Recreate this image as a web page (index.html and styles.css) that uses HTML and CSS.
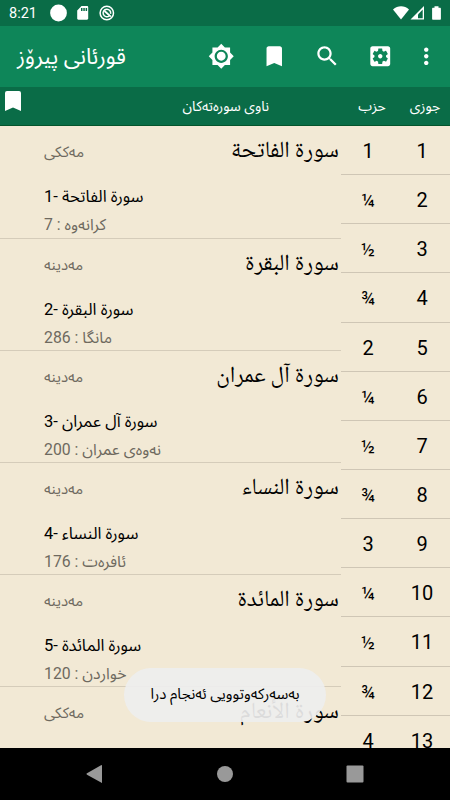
FILE: index.html
```html
<!DOCTYPE html>
<html lang="ckb">
<head>
  <meta charset="UTF-8" />
  <meta name="viewport" content="width=device-width, initial-scale=1" />
  <title>قورئانی پیرۆز</title>
  <link rel="stylesheet" href="styles.css">
</head>
<body>
  <div class="status-bar">
    <span class="clock">8:21</span>
    <svg class="status-left" width="66" height="18" viewBox="0 0 66 18">
      <circle cx="8.5" cy="9" r="8.4" fill="#fff"/>
      <path d="M31.5 2h5.500c.7 0 1.200.5 1.200 1.200v11.400c0 .7-.5 1.200-1.200 1.200h-8.600c-.7 0-1.200-.5-1.200-1.200V6.500zM31 4v3h1.500V4zm2.300 0v3h1.500V4zm2.300 0v3h1.500V4z" fill="#fff" fill-rule="evenodd"/>
      <g fill="none" stroke="#fff">
        <circle cx="56.800" cy="9" r="6.700" stroke-width="1.500"/>
        <path d="M59.200 12a3.800 3.800 0 1 1 1.400-2.200" stroke-width="1.500"/>
        <path d="M54.500 7l6.300 5.600" stroke-width="1.900"/>
      </g>
    </svg>
    <svg class="status-right" width="50" height="16" viewBox="0 0 50 16">
      <path d="M0 4.500C4.700.3 11.500.3 16 4.500L8 14.500z" fill="#fff"/>
      <path d="M31 1v13.500H17.500z" fill="#fff"/>
      <path d="M29.700 4.500v8.700h-4.700V9.500z" fill="#0a6c47"/>
      <path d="M41.500 1.200h4v1.500h1.400c.6 0 1 .4 1 1v10c0 .6-.4 1-1 1h-6.800c-.6 0-1-.4-1-1v-10c0-.6.4-1 1-1h1.400z" fill="#fff"/>
    </svg>
  </div>

  <header class="toolbar">
    <h1 dir="rtl">قورئانی پیرۆز</h1>
    <div class="actions">
      <svg viewBox="0 0 24 24"><path d="M20 8.690V4h-4.690L12 .69 8.690 4H4v4.690L.69 12 4 15.310V20h4.690L12 23.310 15.310 20H20v-4.690L23.310 12 20 8.690zM12 18c-3.310 0-6-2.690-6-6s2.690-6 6-6 6 2.690 6 6-2.690 6-6 6zm0-10c-2.210 0-4 1.790-4 4s1.790 4 4 4 4-1.790 4-4-1.790-4-4-4z"/></svg>
      <svg viewBox="0 0 24 24"><path d="M17 3H7c-1.100 0-1.990.9-1.990 2L5 21l7-3 7 3V5c0-1.100-.9-2-2-2z"/></svg>
      <svg viewBox="0 0 24 24"><path d="M15.500 14h-.79l-.28-.27C15.410 12.590 16 11.110 16 9.500 16 5.910 13.090 3 9.500 3S3 5.910 3 9.500 5.910 16 9.500 16c1.610 0 3.090-.59 4.230-1.570l.27.28v.79l5 4.990L20.490 19l-4.990-5zm-6 0C7.010 14 5 11.990 5 9.500S7.010 5 9.500 5 14 7.010 14 9.500 11.990 14 9.500 14z"/></svg>
      <svg viewBox="0 0 24 24"><path d="M12 10c-1.100 0-2 .9-2 2s.9 2 2 2 2-.9 2-2-.9-2-2-2zm7-7H5c-1.110 0-2 .9-2 2v14c0 1.100.89 2 2 2h14c1.110 0 2-.9 2-2V5c0-1.100-.89-2-2-2zm-1.750 9c0 .23-.02.46-.05.68l1.480 1.160c.13.11.17.3.08.45l-1.400 2.420c-.09.15-.27.21-.43.15l-1.740-.7c-.36.28-.76.51-1.180.69l-.26 1.850c-.03.17-.18.3-.35.3h-2.800c-.17 0-.32-.13-.35-.29l-.26-1.850c-.43-.18-.82-.41-1.180-.69l-1.740.7c-.16.06-.34 0-.43-.15l-1.400-2.420c-.09-.15-.05-.34.08-.45l1.480-1.160c-.03-.23-.05-.46-.05-.69 0-.23.02-.46.05-.68l-1.480-1.160c-.13-.11-.17-.3-.08-.45l1.400-2.420c.09-.15.27-.21.43-.15l1.740.7c.36-.28.76-.51 1.180-.69l.26-1.850c.03-.17.18-.3.35-.3h2.800c.17 0 .32.13.35.29l.26 1.850c.43.18.82.41 1.180.69l1.740-.7c.16-.06.34 0 .43.15l1.400 2.420c.09.15.05.34-.08.45l-1.480 1.160c.03.23.05.46.05.69z"/></svg>
      <svg class="more" viewBox="0 0 24 24"><path d="M12 8c1.100 0 2-.9 2-2s-.9-2-2-2-2 .9-2 2 .9 2 2 2zm0 2c-1.100 0-2 .9-2 2s.9 2 2 2 2-.9 2-2-.9-2-2-2zm0 6c-1.100 0-2 .9-2 2s.9 2 2 2 2-.9 2-2-.9-2-2-2z"/></svg>
    </div>
  </header>

  <div class="table-head">
    <svg viewBox="0 0 16 20"><path d="M2 0h12a2 2 0 0 1 2 2v18l-8-3.500L0 20V2a2 2 0 0 1 2-2z"/></svg>
    <span class="head-name" dir="rtl">ناوی سورەتەکان</span>
    <span class="head-hizb">حزب</span>
    <span class="head-juz">جوزی</span>
  </div>

  <main class="content">
    <ul class="suras">
      <li>
        <div class="top"><span class="place">مەککی</span><span class="title" dir="rtl">سورة الفاتحة</span></div>
        <p class="name">1- سورة الفاتحة</p>
        <p class="info">7 : کرانەوە</p>
      </li>
      <li>
        <div class="top"><span class="place">مەدینە</span><span class="title" dir="rtl">سورة البقرة</span></div>
        <p class="name">2- سورة البقرة</p>
        <p class="info">286 : مانگا</p>
      </li>
      <li>
        <div class="top"><span class="place">مەدینە</span><span class="title" dir="rtl">سورة آل عمران</span></div>
        <p class="name">3- سورة آل عمران</p>
        <p class="info">200 : نەوەی عمران</p>
      </li>
      <li>
        <div class="top"><span class="place">مەدینە</span><span class="title" dir="rtl">سورة النساء</span></div>
        <p class="name">4- سورة النساء</p>
        <p class="info">176 : ئافرەت</p>
      </li>
      <li>
        <div class="top"><span class="place">مەدینە</span><span class="title" dir="rtl">سورة المائدة</span></div>
        <p class="name">5- سورة المائدة</p>
        <p class="info">120 : خواردن</p>
      </li>
      <li>
        <div class="top"><span class="place">مەککی</span><span class="title" dir="rtl">سورة الأنعام</span></div>
      </li>
    </ul>

    <ul class="parts">
      <li><span>1</span><span>1</span></li>
      <li><span class="frac">¼</span><span>2</span></li>
      <li><span class="frac">½</span><span>3</span></li>
      <li><span class="frac">¾</span><span>4</span></li>
      <li><span>2</span><span>5</span></li>
      <li><span class="frac">¼</span><span>6</span></li>
      <li><span class="frac">½</span><span>7</span></li>
      <li><span class="frac">¾</span><span>8</span></li>
      <li><span>3</span><span>9</span></li>
      <li><span class="frac">¼</span><span>10</span></li>
      <li><span class="frac">½</span><span>11</span></li>
      <li><span class="frac">¾</span><span>12</span></li>
      <li><span>4</span><span>13</span></li>
    </ul>

    <div class="toast" dir="rtl">بەسەرکەوتوویی ئەنجام درا</div>
  </main>

  <nav class="nav-bar">
    <svg viewBox="0 0 18 18"><path d="M16 0v18L1 9.700q-1-.7 0-1.400L15 .2q1-.5 1 .6z"/></svg>
    <svg viewBox="0 0 18 18"><circle cx="9" cy="9" r="8"/></svg>
    <svg viewBox="0 0 18 18"><rect x=".5" y=".5" width="17" height="17" rx="1"/></svg>
  </nav>
</body>
</html>
```
FILE: styles.css
```css
* {
  box-sizing: border-box;
}
body {
  margin: 0;
  width: 450px;
  height: 800px;
  display: flex;
  flex-direction: column;
  overflow: hidden;
  background: #f2e9d5;
  font-family: Roboto, "Noto Sans Arabic", "Noto Sans", "DejaVu Sans", sans-serif;
}
h1, p, ul {
  margin: 0;
  padding: 0;
  list-style: none;
}
.status-bar {
  height: 26px;
  flex: none;
  display: flex;
  align-items: center;
  padding: 0 0 0 9px;
  background: #0a6c47;
  color: #fff;
}
.clock {
  width: 41px;
  font-size: 14.5px;
  padding-top: 1px;
}
.status-right {
  margin-left: auto;
  margin-right: 7px;
}
.toolbar {
  height: 61px;
  flex: none;
  display: flex;
  align-items: center;
  justify-content: space-between;
  padding: 0 10px 0 17px;
  background: #0e8659;
  color: #fff;
}
.toolbar h1 {
  font-size: 22px;
  font-weight: 400;
  line-height: 40px;
  white-space: nowrap;
}
.actions {
  display: flex;
  gap: 26.5px;
}
.actions svg {
  width: 26.5px;
  height: 26.5px;
  fill: #fff;
}
.actions .more {
  margin-left: -7px;
  margin-right: 1px;
}
.table-head {
  height: 39px;
  flex: none;
  display: flex;
  align-items: center;
  background: #0a6c47;
  border-bottom: 1px solid #04552c;
  color: #fff;
  font-size: 14px;
}
.table-head svg {
  width: 16px;
  height: 20px;
  margin-left: 5px;
  align-self: flex-start;
  margin-top: 4px;
  fill: #fff;
}
.head-name {
  flex: 1;
  padding-right: 72px;
}
.head-hizb {
  width: 62px;
  text-align: center;
}
.head-juz {
  width: 44px;
  margin-right: 3px;
  text-align: center;
}
.content {
  position: relative;
  flex: 1;
  min-height: 0;
  display: flex;
  overflow: hidden;
}
.suras {
  width: 341px;
}
.suras li {
  height: 112px;
  border-bottom: 1px solid #d5ccba;
  padding: 0 2px 0 44px;
}
.suras li:first-child {
  height: 112.5px;
}
.top {
  display: flex;
  justify-content: space-between;
  align-items: center;
  height: 54px;
}
.place, .info {
  color: #6e695f;
  font-size: 15px;
}
.place {
  padding-bottom: 2px;
}
.title {
  font-family: "Noto Naskh Arabic", "Amiri", "DejaVu Sans", serif;
  font-size: 23px;
  line-height: 50px;
  padding-bottom: 2px;
  white-space: nowrap;
}
.name {
  font-size: 16.5px;
  line-height: 33px;
}
.info {
  font-size: 15.8px;
  line-height: 23px;
}
.parts {
  flex: 1;
}
.parts li {
  display: flex;
  height: 49.15px;
  border-bottom: 1px solid #cfc6b5;
  font-size: 20px;
  line-height: 51px;
}
.parts span {
  width: 54px;
  text-align: center;
}
.parts .frac {
  font-size: 18px;
}
.toast {
  position: absolute;
  left: 124px;
  top: 542px;
  width: 202px;
  height: 54px;
  border-radius: 27px;
  background: rgba(238, 238, 238, 0.92);
  font-size: 15px;
  line-height: 52px;
  text-align: center;
  white-space: nowrap;
}
.nav-bar {
  height: 52px;
  flex: none;
  display: flex;
  align-items: center;
  justify-content: space-between;
  padding: 0 86px;
  background: #000;
}
.nav-bar svg {
  width: 18px;
  height: 18px;
  fill: #999;
}
```
